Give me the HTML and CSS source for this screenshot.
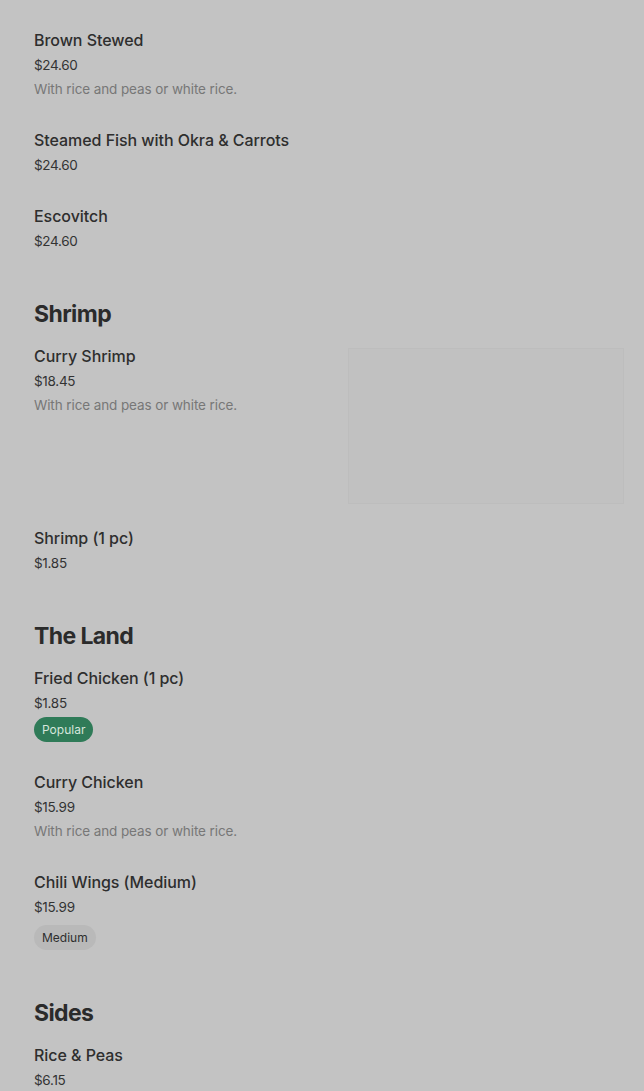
FILE: index.html
```html
<!DOCTYPE html>
<html>
<head>
<meta charset="utf-8">
<link rel="stylesheet" href="styles.css">
</head>
<body>
<main class="menu">
  <section class="section section-first">
    <div class="item">
      <div class="info">
        <div class="title">Brown Stewed</div>
        <div class="price">$24.60</div>
        <div class="desc">With rice and peas or white rice.</div>
      </div>
    </div>
    <div class="item">
      <div class="info">
        <div class="title">Steamed Fish with Okra &amp; Carrots</div>
        <div class="price">$24.60</div>
      </div>
    </div>
    <div class="item">
      <div class="info">
        <div class="title">Escovitch</div>
        <div class="price">$24.60</div>
      </div>
    </div>
  </section>

  <section class="section">
    <h2 class="heading">Shrimp</h2>
    <div class="item item-img">
      <div class="info">
        <div class="title">Curry Shrimp</div>
        <div class="price">$18.45</div>
        <div class="desc">With rice and peas or white rice.</div>
      </div>
      <div class="thumb"></div>
    </div>
    <div class="item">
      <div class="info">
        <div class="title">Shrimp (1 pc)</div>
        <div class="price">$1.85</div>
      </div>
    </div>
  </section>

  <section class="section">
    <h2 class="heading">The Land</h2>
    <div class="item">
      <div class="info">
        <div class="title">Fried Chicken (1 pc)</div>
        <div class="price">$1.85</div>
        <span class="badge badge-green">Popular</span>
      </div>
    </div>
    <div class="item">
      <div class="info">
        <div class="title">Curry Chicken</div>
        <div class="price">$15.99</div>
        <div class="desc">With rice and peas or white rice.</div>
      </div>
    </div>
    <div class="item">
      <div class="info">
        <div class="title">Chili Wings (Medium)</div>
        <div class="price">$15.99</div>
        <span class="badge badge-gray">Medium</span>
      </div>
    </div>
  </section>

  <section class="section">
    <h2 class="heading">Sides</h2>
    <div class="item">
      <div class="info">
        <div class="title">Rice &amp; Peas</div>
        <div class="price">$6.15</div>
      </div>
    </div>
  </section>
</main>
</body>
</html>
```

FILE: styles.css
```css
html, body {
  margin: 0;
  padding: 0;
  background: #c3c3c3;
}
body {
  font-family: Inter, "Liberation Sans", sans-serif;
  color: #2e2e2e;
  overflow: hidden;
}
.menu {
  padding: 14px 20px 0 34px;
}
.section {
  padding-bottom: 32px;
}
.heading {
  margin: 0;
  font-size: 23px;
  line-height: 32px;
  font-weight: 700;
  letter-spacing: -0.6px;
  color: #2b2b2b;
}
.item {
  display: flex;
  justify-content: space-between;
  padding: 14px 0 13px;
}
.info {
  display: flex;
  flex-direction: column;
  align-items: flex-start;
}
.title {
  font-size: 16px;
  line-height: 24px;
  font-weight: 500;
  letter-spacing: -0.05px;
  margin-bottom: 1px;
}
.price {
  font-size: 13.5px;
  line-height: 24px;
  letter-spacing: -0.3px;
  color: #333;
}
.desc {
  font-size: 13.5px;
  line-height: 24px;
  letter-spacing: -0.1px;
  color: #777;
}
.item-img {
  padding-bottom: 8px;
}
.thumb {
  width: 276px;
  height: 156px;
  margin-top: 4px;
  background: #c1c1c1;
  box-shadow: inset 0 0 0 1px #bdbdbd;
  flex-shrink: 0;
}
.badge {
  display: inline-block;
  font-size: 12px;
  line-height: 25px;
  padding: 0 8px;
  border-radius: 12.5px;
  margin-top: 2px;
}
.badge-green {
  background: #2f7b58;
  color: #d6e6dc;
  margin-bottom: 1px;
}
.badge-gray {
  background: #b9b9b9;
  color: #2e2e2e;
  margin-top: 6px;
  margin-bottom: 2px;
}
```
